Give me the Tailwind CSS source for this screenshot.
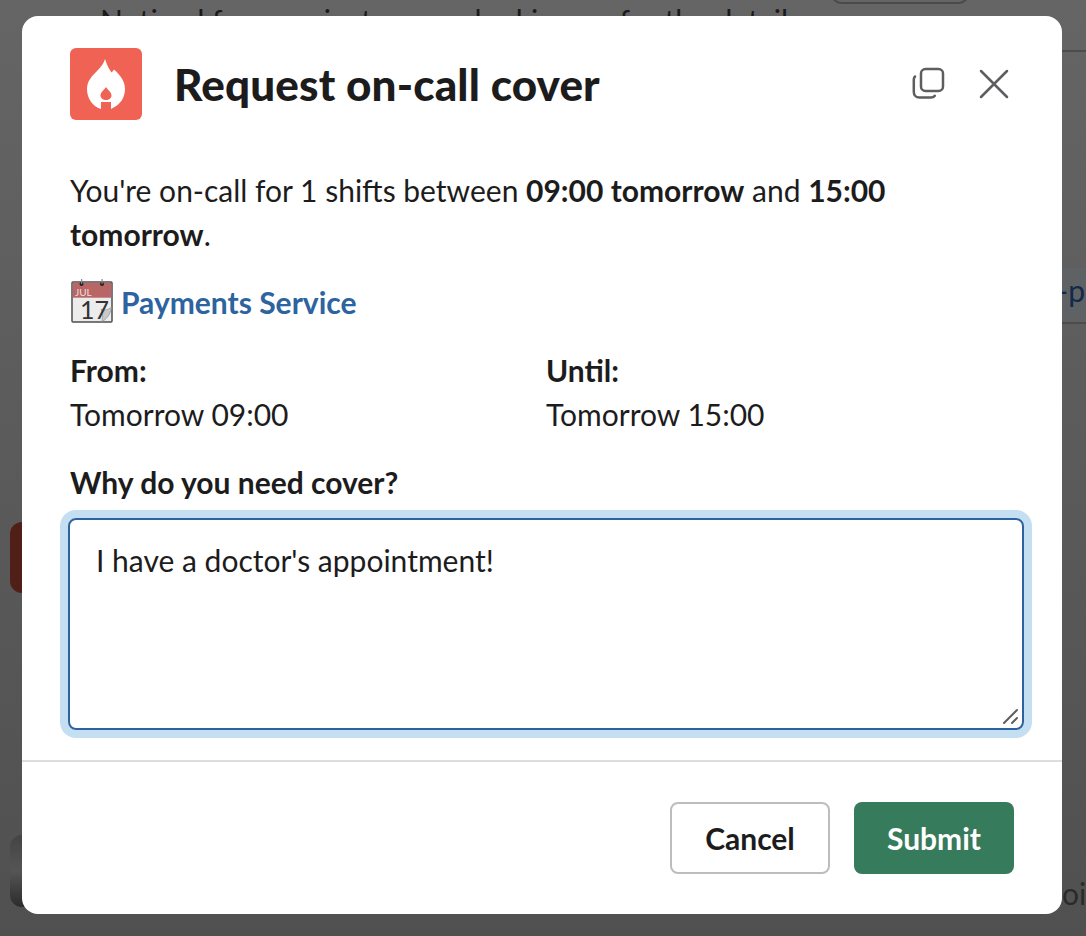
<!DOCTYPE html>
<html lang="en">
<head>
  <meta charset="UTF-8" />
  <title>Request on-call cover</title>
  <script src="https://cdn.jsdelivr.net/npm/@tailwindcss/browser@4"></script>
</head>
<body class="relative w-[1086px] h-[936px] overflow-hidden bg-gradient-to-b from-[#656565] to-[#505050] font-['Lato','Noto_Sans',sans-serif] text-[#1d1c1d]">

  <!-- dimmed page behind the modal -->
  <div class="absolute left-[100px] top-[-2px] text-[30px] leading-[44px] text-[#1a1a1a] whitespace-nowrap">Noticed for a project we are looking on for the details</div>
  <div class="absolute left-[830px] top-[-20px] w-[140px] h-[24px] rounded-[12px] border-2 border-[#4a4a4a]"></div>
  <div class="absolute left-[1062px] top-[50px] w-[24px] h-[2px] bg-[#4c4c4c]"></div>
  <div class="absolute left-[1062px] top-[268px] w-[24px] h-[56px] bg-[#5f6264] border-b-2 border-[#4c4c4c] overflow-hidden text-[30px] leading-[44px] text-[#12294a]"><span class="absolute right-[1px] top-0 whitespace-nowrap">r-p</span></div>
  <div class="absolute left-[10px] top-[522px] w-[30px] h-[71px] rounded-[12px] bg-[#4f1f18]"></div>
  <div class="absolute left-[10px] top-[835px] w-[30px] h-[72px] rounded-[12px] bg-gradient-to-b from-[#444] via-[#555] to-[#2c2c2e]"></div>
  <div class="absolute left-[1062px] top-[871px] w-[24px] overflow-hidden text-[30px] leading-[44px] text-[#2a2a2a]">oin</div>

  <div class="absolute left-[22px] top-[16px] w-[1040px] h-[898px] bg-white rounded-[16px] flex flex-col">
    <header class="flex items-center h-[72px] mt-[32px] ml-[48px] mr-[53px]">
      <div class="w-[72px] h-[72px] rounded-[6px] bg-[#f06354] flex items-center justify-center">
        <svg width="72" height="72" viewBox="0 0 72 72" fill="none">
          <path fill-rule="evenodd" fill="#fff" d="M35 11C37 17 39 21 41.500 24.500C42.500 23.500 43.500 22.500 44 21.500C50 27 55 33 55 41C55 50 50 57 41 61V54H31V61C22 58 17 50 17 41C17 33 22 28 27 23C31 19 34 15 35 11ZM36 39C34.500 42 30.500 44 30.500 47.500C30.500 50 33 52 36 52C39 52 41.500 50 41.500 47.500C41.500 44 37.500 42 36 39Z" />
        </svg>
      </div>
      <h1 class="ml-[32px] text-[44px] leading-[56px] font-black tracking-[0.15px]">Request on-call cover</h1>
      <div class="ml-auto flex items-center gap-[33px]">
        <svg width="34" height="34" viewBox="0 0 34 34" fill="none" stroke="#5e5d60" stroke-width="2.500" stroke-linecap="round">
          <rect x="9" y="2" width="22" height="22" rx="4.500" />
          <path d="M3 9.500c-.8 .8-1.200 1.800-1.200 3v12.500c0 3.300 2.200 5.500 5.500 5.500h11.500c1.800 0 3.200-.6 4-1.800" />
        </svg>
        <svg width="30" height="30" viewBox="0 0 30 30" fill="none" stroke="#5e5d60" stroke-width="2.500" stroke-linecap="round">
          <path d="M2 2l26 26M28 2L2 28" />
        </svg>
      </div>
    </header>

    <div class="mx-[48px] mt-[48px] text-[30px] leading-[44px]">
      <p class="w-[900px]">You're on-call for 1 shifts between <b class="font-bold">09:00 tomorrow</b> and <b class="font-bold">15:00 tomorrow</b>.</p>
      <div class="mt-[24px] flex items-center h-[44px]">
        <svg width="46" height="46" viewBox="0 0 46 46" class="shrink-0 mr-[5px]">
          <rect x="2" y="3" width="40" height="40" rx="1" fill="#ececec" stroke="#4e4e50" stroke-width="1.500" />
          <rect x="2.700" y="3.700" width="38.600" height="15" fill="#b96766" />
          <path d="M31 43C36 41 41 35 41.500 28C37 32 33 31 31 30C33 35 33 40 31 43Z" fill="#c9c9c9" stroke="#8a8a8a" stroke-width=".6" />
          <circle cx="11.500" cy="5" r="2" fill="#222" /><circle cx="32" cy="5" r="2" fill="#222" />
          <rect x="11" y="0" width="1.200" height="5" fill="#888" /><rect x="31.500" y="0" width="1.200" height="5" fill="#888" />
          <text x="5" y="16.500" font-size="10" fill="#f2dede" font-family="Lato, sans-serif">JUL</text>
          <text x="10" y="39.500" font-size="25" fill="#333" font-family="Lato, sans-serif">17</text>
        </svg>
        <a class="font-bold text-[#2d639f] text-[30px]">Payments Service</a>
      </div>
      <div class="mt-[24px] grid grid-cols-[476px_1fr]">
        <div><div class="font-bold">From:</div><div>Tomorrow 09:00</div></div>
        <div><div class="font-bold">Until:</div><div>Tomorrow 15:00</div></div>
      </div>
      <div class="mt-[24px] font-bold">Why do you need cover?</div>
    </div>

    <div class="relative mt-[14px] ml-[46px] w-[956px] h-[212px] rounded-[8px] border-2 border-[#2c62a0] ring-[8px] ring-[#c3dff1] pl-[26px] pr-[24px] pt-[18px] text-[30px] leading-[44px]">
      I have a doctor's appointment!
      <svg class="absolute right-[2px] bottom-[2px]" width="18" height="18" viewBox="0 0 18 18" fill="none" stroke="#5e5d60" stroke-width="2" stroke-linecap="round">
        <path d="M2 15L15 2M10 15l5-5" />
      </svg>
    </div>

    <div class="mt-[30px] h-[2px] bg-[#dddddd]"></div>

    <footer class="flex justify-end gap-[24px] mt-[40px] mr-[48px]">
      <button class="w-[160px] h-[72px] rounded-[8px] border-2 border-[#bdbdbd] bg-white text-[30px] font-bold">Cancel</button>
      <button class="w-[160px] h-[72px] rounded-[8px] bg-[#367b5c] text-white text-[30px] font-bold">Submit</button>
    </footer>
  </div>

</body>
</html>
